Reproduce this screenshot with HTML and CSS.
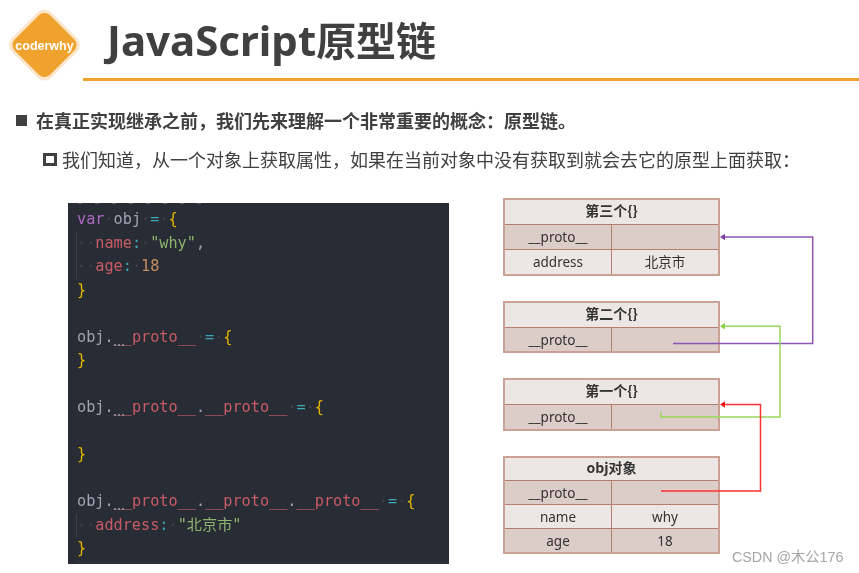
FILE: index.html
```html
<!DOCTYPE html>
<html lang="zh-CN">
<head>
<meta charset="utf-8">
<title>JavaScript原型链</title>
<link rel="stylesheet" href="styles.css">
</head>
<body>
<header class="header">
  <svg class="logo" viewBox="0 0 83 90" width="83" height="90" aria-label="coderwhy">
    <rect x="16.5" y="17" width="56" height="56" rx="10" transform="rotate(45 44.5 45)" fill="#fbe6cd"/>
    <rect x="19.5" y="20" width="50" height="50" rx="8" transform="rotate(45 44.5 45)" fill="#f0a22e"/>
    <text x="44.5" y="49.5" text-anchor="middle" class="logo-text">coderwhy</text>
  </svg>
  <h1 class="title"><span class="title-text">JavaScript</span><span class="title-cjk">原型链</span></h1>
</header>

<p class="point"><span class="square"></span>在真正实现继承之前，我们先来理解一个非常重要的概念：原型链。</p>
<p class="subpoint"><span class="hollow"></span>我们知道，从一个对象上获取属性，如果在当前对象中没有获取到就会去它的原型上面获取：</p>

<main class="content">
  <div class="code">
    <div class="code-inner">
      <div class="ln"><span class="kw">var</span><span class="ws">·</span><span class="id">obj</span><span class="ws">·</span><span class="op">=</span><span class="ws">·</span><span class="br">{</span></div>
      <div class="guide">
        <div class="ln"><span class="ws">··</span><span class="pr">name</span><span class="op">:</span><span class="ws">·</span><span class="st">"why"</span><span class="id">,</span></div>
        <div class="ln"><span class="ws">··</span><span class="pr">age</span><span class="op">:</span><span class="ws">·</span><span class="nu">18</span></div>
      </div>
      <div class="ln"><span class="br">}</span></div>
      <div class="ln"></div>
      <div class="ln"><span class="id">obj.</span><span class="hint pr">__</span><span class="pr">proto__</span><span class="ws">·</span><span class="op">=</span><span class="ws">·</span><span class="br">{</span></div>
      <div class="ln"><span class="br">}</span></div>
      <div class="ln"></div>
      <div class="ln"><span class="id">obj.</span><span class="hint pr">__</span><span class="pr">proto__</span><span class="id">.</span><span class="pr">__proto__</span><span class="ws">·</span><span class="op">=</span><span class="ws">·</span><span class="br">{</span></div>
      <div class="ln"></div>
      <div class="ln"><span class="br">}</span></div>
      <div class="ln"></div>
      <div class="ln"><span class="id">obj.</span><span class="hint pr">__</span><span class="pr">proto__</span><span class="id">.</span><span class="pr">__proto__</span><span class="id">.</span><span class="pr">__proto__</span><span class="ws">·</span><span class="op">=</span><span class="ws">·</span><span class="br">{</span></div>
      <div class="guide">
        <div class="ln"><span class="ws">··</span><span class="pr">address</span><span class="op">:</span><span class="ws">·</span><span class="st">"北京市"</span></div>
      </div>
      <div class="ln"><span class="br">}</span></div>
      <div class="active"></div>
    </div>
  </div>

  <div class="diagram">
    <table class="box">
      <tr class="light head"><th colspan="2">第三个{}</th></tr>
      <tr class="dark"><td>__proto__</td><td></td></tr>
      <tr class="light"><td>address</td><td>北京市</td></tr>
    </table>
    <table class="box">
      <tr class="light head"><th colspan="2">第二个{}</th></tr>
      <tr class="dark"><td>__proto__</td><td></td></tr>
    </table>
    <table class="box">
      <tr class="light head"><th colspan="2">第一个{}</th></tr>
      <tr class="dark"><td>__proto__</td><td></td></tr>
    </table>
    <table class="box compact">
      <tr class="light head"><th colspan="2">obj对象</th></tr>
      <tr class="dark"><td>__proto__</td><td></td></tr>
      <tr class="light"><td>name</td><td>why</td></tr>
      <tr class="dark"><td>age</td><td>18</td></tr>
    </table>
    <svg class="arrows" viewBox="503 198 356 365" width="356" height="365" aria-hidden="true">
      <path class="line" stroke="#8a55b3" d="M673 343.500H812.700V237H723"/>
      <path fill="#7a3fa8" d="M720 237l5-3.200v6.400z"/>
      <path class="line" stroke="#98d85a" d="M660.800 412.500V417H780V326.300H723"/>
      <path fill="#8ad04a" d="M720 326.300l5-3.200v6.400z"/>
      <path class="line" stroke="#ff3030" d="M661 491H760.500V404.500H723"/>
      <path fill="#f01010" d="M720 404.500l5-3.200v6.400z"/>
    </svg>
  </div>
</main>
<div class="watermark">CSDN @木公176</div>
</body>
</html>
```

FILE: styles.css
```css
* { box-sizing: border-box; }
html, body { margin: 0; padding: 0; }
body {
  width: 859px;
  height: 573px;
  overflow: hidden;
  position: relative;
  background: #fff;
  color: #404040;
  font-family: "Noto Sans", "Noto Sans CJK SC", sans-serif;
  filter: blur(0.3px);
}

.header { display: flex; height: 81px; }
.logo { flex: none; display: block; margin-bottom: -9px; }
.logo-text {
  fill: #fff;
  font-family: "Liberation Sans", sans-serif;
  font-weight: 700;
  font-size: 12.5px;
}
.title {
  flex: 1;
  margin: 0;
  padding-left: 24px;
  border-bottom: 3px solid #f0a22e;
  color: #404040;
  font-family: "Noto Sans", "Noto Sans CJK SC", sans-serif;
  font-size: 40px;
  font-weight: 700;
  line-height: 80px;
  height: 81px;
  white-space: nowrap;
}
.title-text { font-size: 42px; }

.point, .subpoint { margin: 0; display: flex; align-items: center; white-space: nowrap; }
.point {
  margin-top: 24px;
  height: 30px;
  padding-left: 16px;
  font-size: 18px;
  font-weight: 700;
  font-family: "Noto Sans CJK SC", sans-serif;
}
.square { flex: none; width: 11px; height: 11px; margin-right: 9px; background: #404040; }
.subpoint {
  margin-top: 9px;
  height: 30px;
  padding-left: 43px;
  font-size: 18px;
  font-family: "Noto Sans CJK SC", sans-serif;
}
.hollow { flex: none; width: 14px; height: 13px; margin-right: 5px; border: 3px solid #404040; }

.content { display: flex; gap: 54px; padding: 24px 0 0 68px; }

.code {
  position: relative;
  flex: none;
  width: 381px;
  height: 361px;
  margin-top: 5px;
  padding-left: 9px;
  background: #282c34;
  overflow: hidden;
  font-family: "DejaVu Sans Mono", "Noto Sans CJK SC", monospace;
  font-size: 15.2px;
}
.code::before {
  content: "";
  position: absolute;
  left: 10px;
  top: 0;
  width: 130px;
  height: 1px;
  background: repeating-linear-gradient(90deg, #5c616b 0 4px, transparent 4px 17px);
}
.code-inner { padding-top: 5.400px; }
.ln { height: 23.5px; line-height: 23.5px; white-space: pre; }
.guide { box-shadow: inset 1px 0 0 #3c4149; margin-left: -1px; padding-left: 1px; }
.active { height: 8px; background: #2c313a; margin-left: -1px; }
.kw { color: #ad69c4; }
.id { color: #9ea5b1; }
.ws { color: #3d424b; }
.op { color: #3fa8b8; }
.br { color: #e3b800; }
.pr { color: #c85c66; }
.st { color: #8db56f; }
.nu { color: #c48f5f; }
.hint { position: relative; }
.hint::after {
  content: "";
  position: absolute;
  left: 0;
  bottom: 0;
  width: 10px;
  border-bottom: 2px dotted #7f8590;
}

.diagram {
  position: relative;
  flex: none;
  width: 217px;
  display: flex;
  flex-direction: column;
  gap: 25px;
}
.box {
  width: 217px;
  table-layout: fixed;
  border-collapse: collapse;
  border: 2px solid #c9a195;
  color: #333;
  font-family: "Noto Sans", "Noto Sans CJK SC", sans-serif;
  font-size: 13.5px;
  text-align: center;
}
.box tr { height: 25px; }
.box tr.head { height: 25.500px; }
.compact tr { height: 24px; }
.compact tr.head { height: 24px; }
.box td, .box th { border: 1px solid #b57f6d; line-height: 1; }
.box td { padding: 2px 0 0; }
.box th { padding: 0 0 4px; }
.box td:first-child { width: 108px; }
.box th { font-weight: 700; font-family: "Noto Sans CJK SC", sans-serif; font-size: 14px; }
.light { background: #ece7e4; }
.dark { background: #dccdc9; }

.arrows { position: absolute; left: 0; top: 0; overflow: visible; }
.line { fill: none; stroke-width: 1.5; }

.watermark {
  position: absolute;
  left: 732px;
  top: 547px;
  color: #a6a6a6;
  font-family: "Liberation Sans", "Noto Sans CJK SC", sans-serif;
  font-size: 14.300px;
  line-height: 20px;
  white-space: nowrap;
}
```
